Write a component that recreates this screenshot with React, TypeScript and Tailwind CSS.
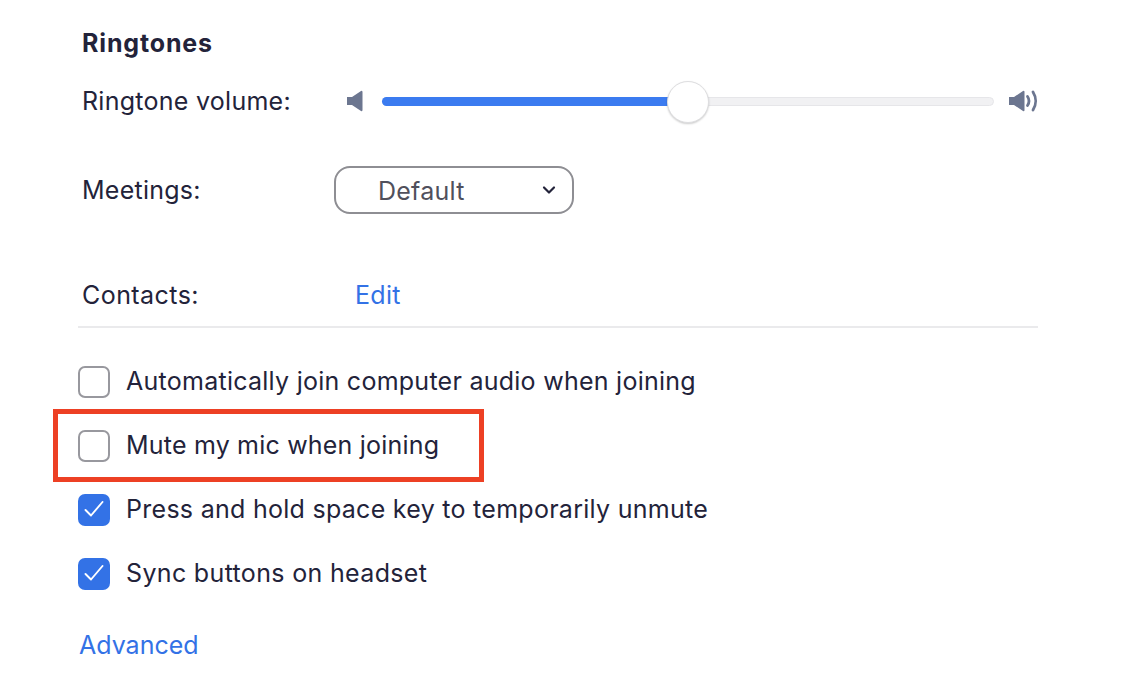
const CheckRow = ({ label, checked, boxed, spacing }: { label: string; checked?: boolean; boxed?: boolean; spacing: string }) => (
  <div className="relative flex h-8 items-center">
    {boxed && <div className="absolute left-[-25px] top-[-21px] h-[73px] w-[431px] border-[5px] border-[#ed4024]" />}
    {checked ? (
      <div className="flex h-8 w-8 shrink-0 items-center justify-center rounded-[7px] bg-[#3372e6]">
        <svg width="20" height="18" viewBox="0 0 20 18" fill="none" stroke="white" strokeWidth="1.900" strokeLinecap="round" strokeLinejoin="round">
          <path d="M1.500 9 7 14.500 18.500 1" />
        </svg>
      </div>
    ) : (
      <div className="h-8 w-8 shrink-0 rounded-[7px] border-2 border-[#98989e] bg-white" />
    )}
    <span className={`mb-0.5 ml-4 whitespace-nowrap ${spacing}`}>{label}</span>
  </div>
);

const SpeakerIcon = ({ loud }: { loud?: boolean }) => (
  <svg className="shrink-0" width={loud ? 31 : 17} height="22" viewBox={loud ? "0 0 31 22" : "0 0 17 22"} fill="#6c7690">
    <path d="M1 7h5l9-6a1 1 0 0 1 1.500 1v18a1 1 0 0 1-1.500 1l-9-6H1z" />
    {loud && (
      <g fill="none" stroke="#6c7690" strokeWidth="2.800" strokeLinecap="round">
        <path d="M19.500 6.500c2 3 2 6 0 9" />
        <path d="M25 2c3.500 5.500 3.500 12.500 0 18" />
      </g>
    )}
  </svg>
);

export default function App() {
  return (
    <div className="h-[684px] w-[1132px] overflow-hidden bg-white pl-[78px] text-[25px] leading-8 text-[#23233a] [font-family:Inter,sans-serif]">
      <div className="w-[960px]">
        <div className="pl-[5px]">
          <h2 className="-ml-px pt-[27px] font-bold tracking-[0.85px]">Ringtones</h2>
          <div className="mt-[26px] flex h-8 items-center">
            <span className="-ml-px w-[264px] shrink-0 tracking-[0.27px]">Ringtone volume:</span>
            <SpeakerIcon />
            <div className="relative ml-[19px] h-[9px] w-[612px] shrink-0 rounded-full border border-[#e6e6e9] bg-[#f1f1f3]">
              <div className="absolute -left-px -top-px h-[9px] w-[290px] rounded-l-full bg-[#3b7bf0]" />
              <div className="absolute left-[284px] top-[-17px] h-[42px] w-[42px] rounded-full border border-[#dedee0] bg-white shadow-[0_1px_2px_rgba(0,0,0,0.2)]" />
            </div>
            <div className="ml-[14px] shrink-0">
              <SpeakerIcon loud />
            </div>
          </div>
          <div className="mt-[49px] flex h-12 items-center">
            <span className="-ml-px w-[252px] shrink-0 tracking-[0.25px]">Meetings:</span>
            <div className="flex h-12 w-60 items-center justify-between rounded-[16px] border-2 border-[#8e8e93] pl-[42px] pr-4 text-[#50505c]">
              <span className="mt-0.5 tracking-[0.25px]">Default</span>
              <svg width="14" height="10" viewBox="0 0 14 10" fill="none" stroke="#23233a" strokeWidth="2.200" strokeLinecap="round" strokeLinejoin="round">
                <path d="M2 2.500 7 7.500 12 2.500" />
              </svg>
            </div>
          </div>
          <div className="mt-[65px] flex h-8 items-center">
            <span className="-ml-px w-[273px] shrink-0 tracking-[0.45px]">Contacts:</span>
            <span className="text-[#3372e6] tracking-[0.3px]">Edit</span>
          </div>
        </div>
        <div className="mt-[15px] h-0.5 bg-[#eaeaec]" />
        <div className="mt-[38px] flex flex-col gap-8">
          <CheckRow label="Automatically join computer audio when joining" spacing="tracking-[0.26px]" />
          <CheckRow label="Mute my mic when joining" spacing="tracking-[0.2px]" boxed />
          <CheckRow label="Press and hold space key to temporarily unmute" spacing="tracking-[0.28px]" checked />
          <CheckRow label="Sync buttons on headset" spacing="tracking-[0.34px]" checked />
        </div>
        <div className="mt-[39px] pl-px text-[#3372e6]">Advanced</div>
      </div>
    </div>
  );
}
